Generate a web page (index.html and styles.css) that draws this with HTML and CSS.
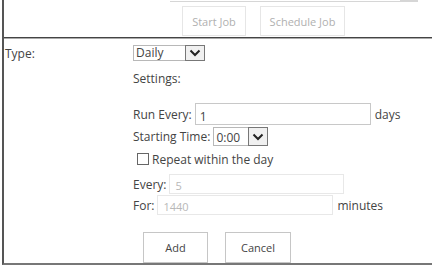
FILE: index.html
```html
<!DOCTYPE html>
<html lang="en">
<head>
    <meta charset="UTF-8">
    <title>Job Schedule</title>
    <link rel="stylesheet" href="styles.css">
</head>
<body>
    <div class="frame">
        <div class="top">
            <div class="field-edge"><span class="field-scroll"></span></div>
            <div class="job-actions">
                <button class="btn btn-disabled btn-start" disabled>Start Job</button>
                <button class="btn btn-disabled btn-schedule" disabled>Schedule Job</button>
            </div>
        </div>

        <div class="form">
            <div class="label-col">Type:</div>
            <div class="content-col">
                <div class="select select-type">
                    <span class="select-text">Daily</span>
                    <span class="select-arrow">
                        <svg width="12" height="8" viewBox="0 0 12 8"><path d="M1.5 1.5 L6 6 L10.5 1.5" fill="none" stroke="#222" stroke-width="2"/></svg>
                    </span>
                </div>
                <div class="settings-title">Settings:</div>

                <div class="row row-run">
                    <span class="lbl">Run Every:</span>
                    <span class="input input-run">1</span>
                    <span class="unit">days</span>
                </div>
                <div class="row row-time">
                    <span class="lbl">Starting Time:</span>
                    <div class="select select-time">
                        <span class="select-text">0:00</span>
                        <span class="select-arrow">
                            <svg width="12" height="8" viewBox="0 0 12 8"><path d="M1.5 1.5 L6 6 L10.5 1.5" fill="none" stroke="#222" stroke-width="2"/></svg>
                        </span>
                    </div>
                </div>
                <label class="row row-check">
                    <span class="checkbox"></span>
                    <span>Repeat within the day</span>
                </label>
                <div class="row row-every">
                    <span class="lbl">Every:</span>
                    <span class="input input-disabled input-every">5</span>
                </div>
                <div class="row row-for">
                    <span class="lbl">For:</span>
                    <span class="input input-disabled input-for">1440</span>
                    <span class="unit">minutes</span>
                </div>

                <div class="form-actions">
                    <button class="btn btn-add">Add</button>
                    <button class="btn btn-cancel">Cancel</button>
                </div>
            </div>
        </div>
    </div>
</body>
</html>
```

FILE: styles.css
```css
body {
    margin: 0;
    background: #fff;
    font-family: "Open Sans", "Noto Sans", sans-serif;
    font-size: 12px;
    color: #444;
}

.frame {
    margin-left: 2px;
    border-left: 2px solid #555;
    border-bottom: 2px solid #777;
    height: 263px;
}

.top {
    height: 37px;
    border-bottom: 1px solid #444;
    box-shadow: 0 1px 0 #aaa;
}

.field-edge {
    margin-left: 166px;
    width: 248px;
    height: 1px;
    border-bottom: 1px solid #d6d6d6;
    display: flex;
    justify-content: flex-end;
}

.field-scroll {
    width: 18px;
    height: 1px;
    background: #d6d6d6;
}

.job-actions {
    display: flex;
    gap: 14px;
    margin: 4px 0 0 178px;
}

.btn {
    font-family: inherit;
    font-size: 11px;
    color: #444;
    background: #fff;
    border: 1px solid #c6c6c6;
    height: 31px;
    padding: 0;
    margin: 0;
}

.btn-disabled {
    color: #b0b0b0;
    border-color: #e6e6e6;
    height: 30px;
}

.btn-start {
    width: 64px;
}

.btn-schedule {
    width: 85px;
}

.btn-add {
    width: 65px;
}

.btn-cancel {
    width: 66px;
}

.form {
    display: flex;
    margin-top: 7px;
}

.label-col {
    width: 128px;
    padding-left: 1px;
    font-size: 12px;
    line-height: 18px;
}

.content-col {
    display: flex;
    flex-direction: column;
    align-items: flex-start;
}

.select {
    display: flex;
    border: 1px solid #b8b8b8;
    background: #fff;
}

.select-text {
    font-size: 12px;
    line-height: 14px;
    padding-left: 2px;
}

.select-arrow {
    display: flex;
    align-items: center;
    justify-content: center;
    width: 18px;
    margin: -1px -1px -1px 0;
    border: 1px solid #777;
    background: #f0f0f0;
}

.select-type {
    width: 70px;
    height: 14px;
}

.select-type .select-text {
    flex: 1;
}

.settings-title {
    font-size: 12px;
    margin-top: 9px;
    line-height: 18px;
}

.row {
    display: flex;
    align-items: center;
    font-size: 12px;
}

.lbl {
    margin-right: 3px;
}

.row-run {
    margin-top: 15px;
}

.input {
    display: block;
    box-sizing: border-box;
    border: 1px solid #c8c8c8;
    font-size: 12px;
    padding: 4px 0 0 4px;
    background: #fff;
}

.input-run {
    width: 176px;
    height: 22px;
}

.unit {
    margin-left: 4px;
}

.row-time {
    margin-top: 2px;
}

.select-time {
    width: 53px;
    height: 17px;
}

.select-time .select-text {
    flex: 1;
    padding-top: 3px;
}

.row-check {
    margin-top: 5px;
    height: 16px;
}

.checkbox {
    width: 10px;
    height: 10px;
    border: 1px solid #666;
    margin: 0 3px 0 4px;
}

.input-disabled {
    border-color: #e8e8e8;
    color: #b8b8b8;
    height: 20px;
    font-size: 11px;
    padding: 3px 0 0 5px;
}

.row-every {
    margin-top: 7px;
}

.input-every {
    width: 175px;
}

.row-for {
    margin-top: 1px;
}

.input-for {
    width: 176px;
}

.form-actions {
    display: flex;
    gap: 17px;
    margin: 17px 0 0 10px;
}
```
